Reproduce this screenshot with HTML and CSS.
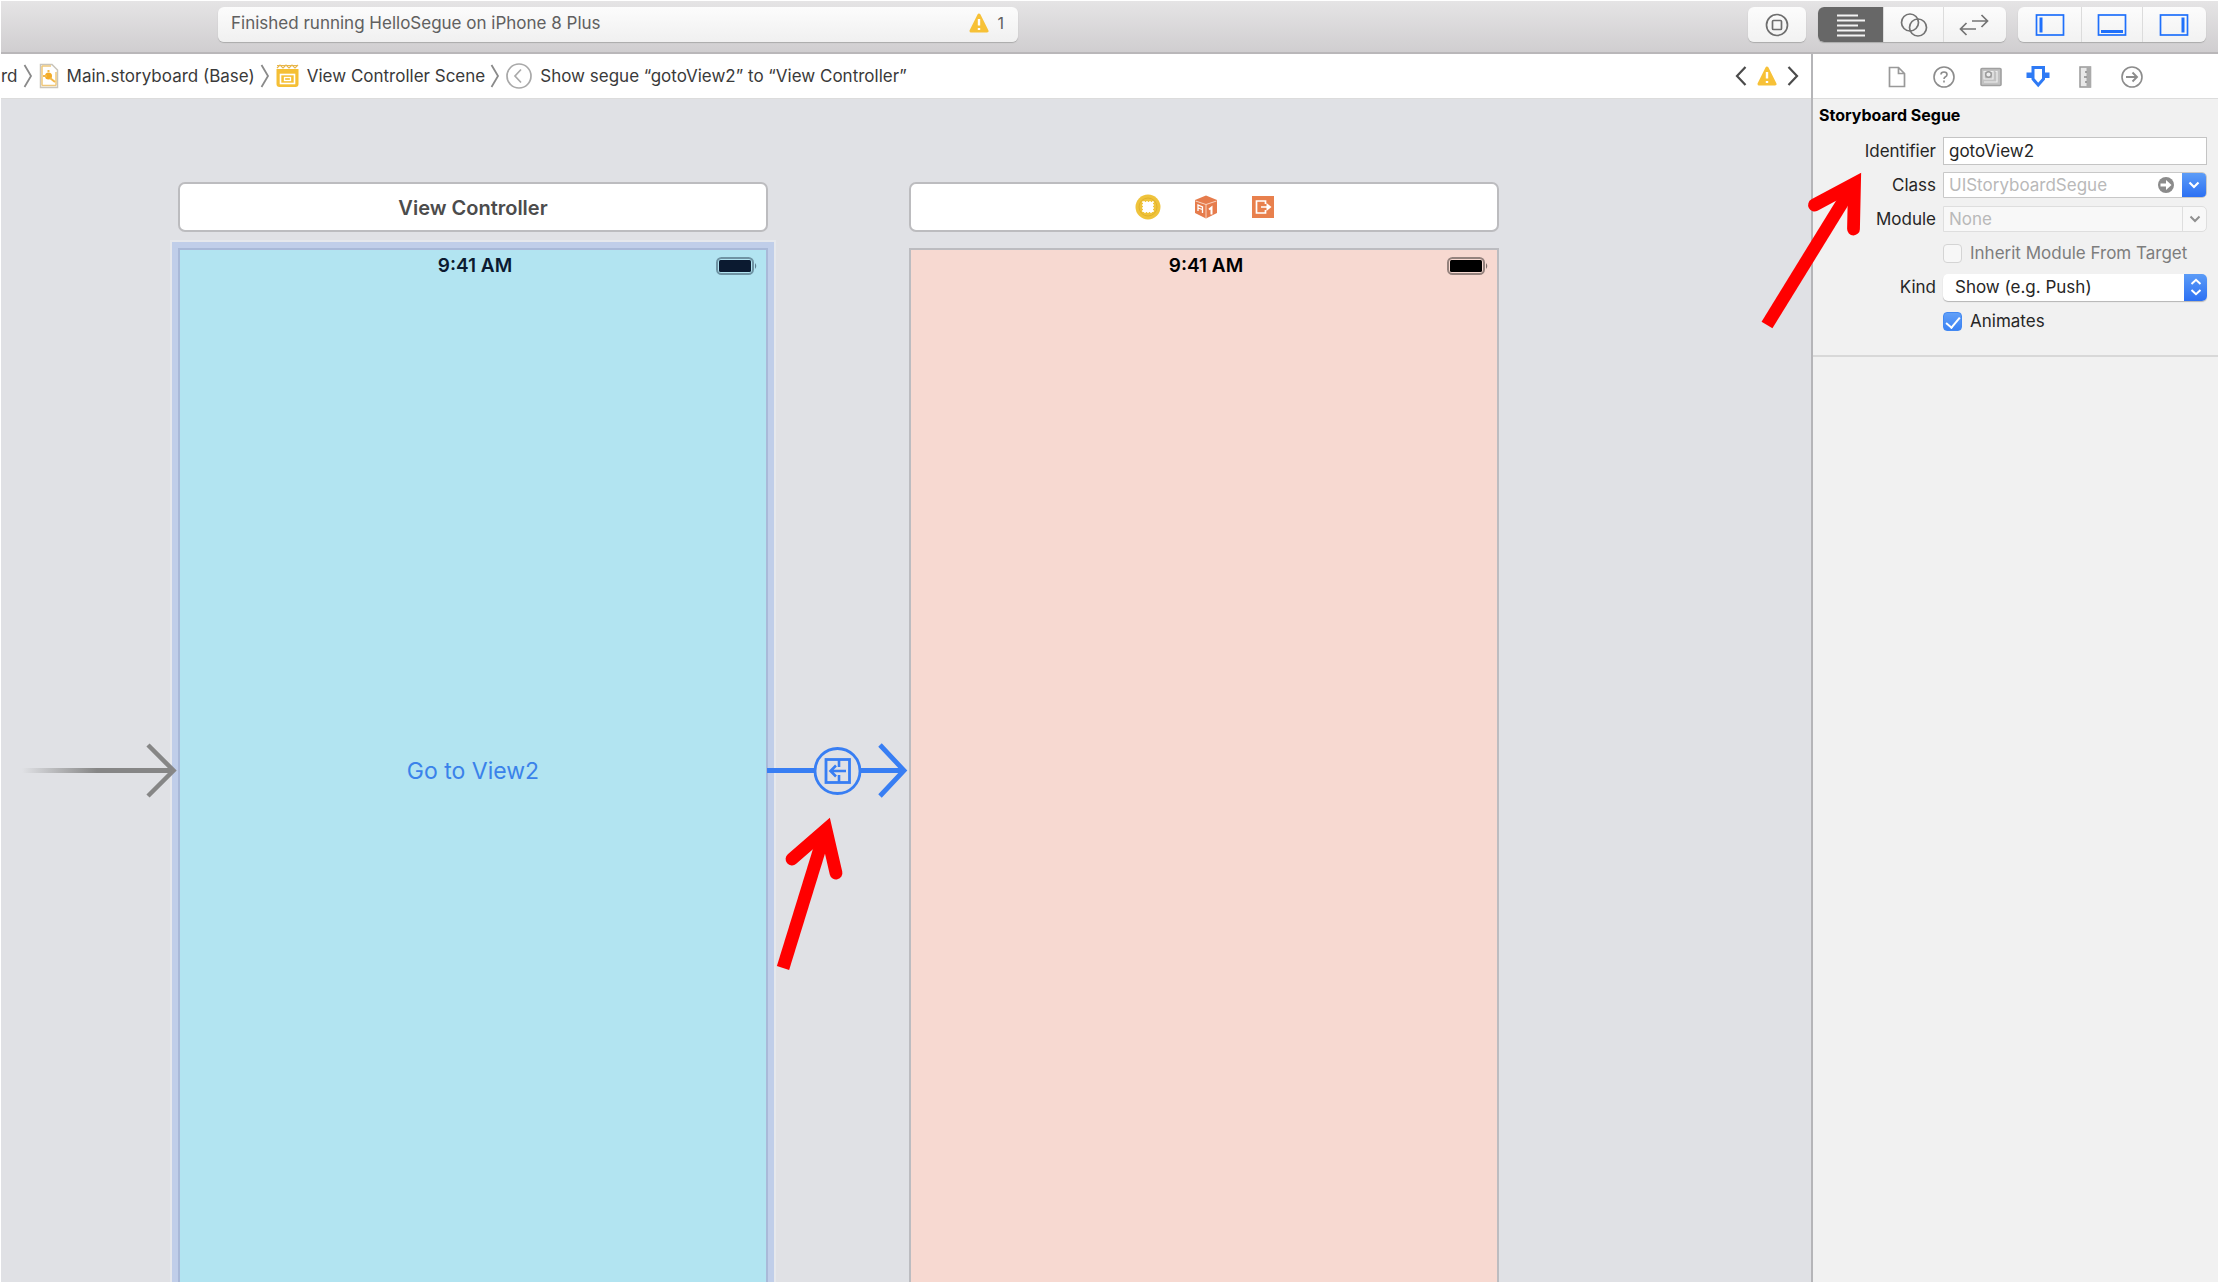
FILE: index.html
```html
<!DOCTYPE html>
<html lang="en">
<head>
<meta charset="utf-8">
<meta name="viewport" content="width=device-width, initial-scale=1">
<title>HelloSegue</title>
<link rel="stylesheet" href="styles.css">
</head>
<body>
<svg class="defs" width="0" height="0" aria-hidden="true">
  <symbol id="warning" viewBox="0 0 20 20">
    <path d="M10 2 L18 18 H2 Z" fill="#f7c137" stroke="#f7c137" stroke-width="3" stroke-linejoin="round"/>
    <path d="M10 6 V12.500 M10 15 V17" stroke="#fff" stroke-width="2.400"/>
  </symbol>
  <symbol id="separator" viewBox="0 0 10 24">
    <path d="M1.500 1 L8 12 L1.500 23" fill="none" stroke="#8a8a8a" stroke-width="1.800"/>
  </symbol>
  <symbol id="battery" viewBox="0 0 42 18">
    <rect x="1" y="1" width="36" height="16" rx="4.500" fill="none" stroke="currentColor" stroke-opacity=".4" stroke-width="2"/>
    <rect x="3" y="3" width="32" height="12" rx="1.500" fill="currentColor"/>
    <path d="M39 6 Q41.500 9 39 12 Z" fill="currentColor" fill-opacity=".5"/>
  </symbol>
</svg>

<div class="app">
  <header class="toolbar">
    <div class="activity">
      <span>Finished running HelloSegue on iPhone 8 Plus</span>
      <span class="issues"><svg class="i20" aria-hidden="true"><use href="#warning"/></svg>1</span>
    </div>
    <div class="tools">
      <div class="group single">
        <button type="button" aria-label="Library">
          <svg width="24" height="24" viewBox="0 0 24 24" fill="none" stroke="#6e6e6e" stroke-width="1.700"><circle cx="12" cy="12" r="10.500"/><rect x="7.500" y="7.500" width="9" height="9" rx="1"/></svg>
        </button>
      </div>
      <div class="group editors">
        <button type="button" class="active" aria-label="Standard editor">
          <svg width="30" height="24" viewBox="0 0 30 24" stroke="#f4f4f4" stroke-width="1.800"><path d="M1 2.500H22M1 7.500H29M1 12.500H22M1 17.500H29M1 22.500H29"/></svg>
        </button>
        <button type="button" aria-label="Assistant editor">
          <svg width="28" height="24" viewBox="0 0 28 24" fill="none" stroke="#737373" stroke-width="1.700"><circle cx="10" cy="9.500" r="8.500"/><circle cx="18" cy="14.500" r="8.500"/></svg>
        </button>
        <button type="button" aria-label="Version editor">
          <svg width="30" height="22" viewBox="0 0 30 22" fill="none" stroke="#737373" stroke-width="1.700"><path d="M13 7H28M22.500 1L28.500 7L22.500 13M17 15H2M7.500 9L1.500 15L7.500 21"/></svg>
        </button>
      </div>
      <div class="group panels">
        <button type="button" aria-label="Navigator">
          <svg width="30" height="24" viewBox="0 0 30 24" fill="none" stroke="#1f70fb"><rect x="1.500" y="2" width="27" height="20" stroke-width="1.700"/><path d="M6 4.500V19.500" stroke-width="3"/></svg>
        </button>
        <button type="button" aria-label="Debug area">
          <svg width="30" height="24" viewBox="0 0 30 24" fill="none" stroke="#1f70fb"><rect x="1.500" y="2" width="27" height="20" stroke-width="1.700"/><path d="M4 18.500H26" stroke-width="3"/></svg>
        </button>
        <button type="button" aria-label="Inspectors">
          <svg width="30" height="24" viewBox="0 0 30 24" fill="none" stroke="#1f70fb"><rect x="1.500" y="2" width="27" height="20" stroke-width="1.700"/><path d="M24 4.500V19.500" stroke-width="3"/></svg>
        </button>
      </div>
    </div>
  </header>

  <div class="workspace">
    <main class="editor">
      <nav class="jumpbar" aria-label="Jump bar">
        <span class="crumb">rd</span>
        <svg class="sep" aria-hidden="true"><use href="#separator"/></svg>
        <a class="crumb" href="#main">
          <svg width="20" height="26" viewBox="0 0 20 26" aria-hidden="true"><path d="M1.500 1.500H13L18.500 7V24.500H1.500Z" fill="#fff" stroke="#c9c5bb" stroke-width="1.500"/><path d="M3 3H12M3 3V22.500M17 9V22.500M3 22.500H17" stroke="#efc77a" stroke-width="1.500" fill="none"/><circle cx="9.500" cy="13" r="3.500" fill="#f3ab25"/><path d="M11 15L16 19M4 13H8M9.500 9V7" stroke="#f3b849" stroke-width="2"/></svg>
          Main.storyboard (Base)
        </a>
        <svg class="sep" aria-hidden="true"><use href="#separator"/></svg>
        <a class="crumb" href="#scene">
          <svg width="23" height="24" viewBox="0 0 23 24" aria-hidden="true"><path d="M.500 5H22.500V20Q22.500 23 19.500 23H3.500Q.500 23 .500 20Z" fill="#f5bf35"/><path d="M1 1.500H22M1 4L4 1L7 4L10 1L13 4L16 1L19 4L22 1" stroke="#e8b64a" stroke-width="1.200" fill="none"/><rect x="4.500" y="10.500" width="14" height="9" fill="none" stroke="#fff" stroke-width="1.600"/><rect x="8.500" y="13.500" width="6" height="3" fill="none" stroke="#fff" stroke-width="1.300"/></svg>
          View Controller Scene
        </a>
        <svg class="sep" aria-hidden="true"><use href="#separator"/></svg>
        <a class="crumb" href="#segue">
          <svg width="26" height="26" viewBox="0 0 26 26" fill="none" stroke="#a9a9a9" stroke-width="1.700" aria-hidden="true"><circle cx="13" cy="13" r="12"/><path d="M15 6.500L9 13L15 19.500"/></svg>
          Show segue “gotoView2” to “View Controller”
        </a>
        <span class="issue-nav">
          <button type="button" aria-label="Previous issue"><svg width="12" height="20" viewBox="0 0 12 20" fill="none" stroke="#4b4b4b" stroke-width="2.200"><path d="M10.500 1L2 10L10.500 19"/></svg></button>
          <svg class="i20" aria-hidden="true"><use href="#warning"/></svg>
          <button type="button" aria-label="Next issue"><svg width="12" height="20" viewBox="0 0 12 20" fill="none" stroke="#4b4b4b" stroke-width="2.200"><path d="M1.500 1L10 10L1.500 19"/></svg></button>
        </span>
      </nav>

      <div class="canvas" id="main">
        <section class="scene" id="scene">
          <div class="dock">View Controller</div>
          <div class="phone blue selected">
            <div class="statusbar"><span>9:41 AM</span><svg class="battery" aria-hidden="true"><use href="#battery"/></svg></div>
            <button type="button" class="goto">Go to View2</button>
          </div>
        </section>
        <section class="scene">
          <div class="dock icons">
            <svg width="26" height="26" viewBox="0 0 26 26" aria-label="View Controller"><circle cx="13" cy="13" r="12.500" fill="#efc33b"/><circle cx="13" cy="13" r="9" fill="none" stroke="#e2b12c" stroke-width="1"/><rect x="8" y="8" width="10" height="10" fill="#fff" stroke="#fff" stroke-width="1.500" stroke-dasharray="2 1"/></svg>
            <svg width="24" height="24" viewBox="0 0 24 24" aria-label="First Responder"><path d="M12 .500L23 5V18L12 23.500L1 18V5Z" fill="#e67c4c"/><path d="M1.500 6L12 9.500L22.500 6M12 9.500V23" fill="none" stroke="#f9d3bf" stroke-width="1"/><path d="M15 14.500L17.500 12.500V19.500" fill="none" stroke="#fff" stroke-width="2"/><path d="M4 16V10L8.500 12V18M4 13L8.500 14.500" fill="none" stroke="#fff" stroke-width="1.300"/></svg>
            <svg width="24" height="24" viewBox="0 0 24 24" aria-label="Exit"><path d="M1 1H23V23H1Z" fill="#e8804d"/><path d="M14.500 9V6H5.500V18H14.500V15M10 12H17" fill="none" stroke="#fff" stroke-width="1.700"/><path d="M15.500 8L20.500 12L15.500 16Z" fill="#fff"/></svg>
          </div>
          <div class="phone pink">
            <div class="statusbar"><span>9:41 AM</span><svg class="battery" aria-hidden="true"><use href="#battery"/></svg></div>
          </div>
        </section>

        <svg class="entry" width="156" height="56" viewBox="0 0 156 56" fill="none" aria-hidden="true">
          <defs><linearGradient id="fade" gradientUnits="userSpaceOnUse" x1="0" x2="75" y1="0" y2="0"><stop offset="0" stop-color="#868686" stop-opacity="0"/><stop offset="1" stop-color="#868686"/></linearGradient></defs>
          <rect x="0" y="26" width="150" height="5" fill="url(#fade)"/>
          <path d="M126 3L151.500 28.500L126 54" stroke="#868686" stroke-width="4.500"/>
        </svg>
        <svg class="segue" id="segue" width="142" height="56" viewBox="0 0 142 56" fill="none" stroke="#387ef3" aria-label="Show segue">
          <path d="M0 28.500H48M94 28.500H136M113 3L137 28.500L113 54" stroke-width="4.800"/>
          <circle cx="70.500" cy="29" r="22.500" stroke-width="2.800"/>
          <rect x="59" y="17.500" width="23.500" height="23" stroke-width="2.800"/><path d="M72 17.500V25M72 33V40.500M64 29H79M69 23.500L63.500 29L69 34.500" stroke-width="2.600"/>
        </svg>
        <svg class="callout segue-callout" width="60" height="160" viewBox="0 0 60 160" fill="none" stroke="#f00" stroke-width="12.800" aria-hidden="true">
          <path d="M9 153L50 20"/><path d="M18 44L52 14.500L62 58" stroke-linecap="round"/>
        </svg>
      </div>
    </main>

    <aside class="inspector">
      <div class="tabs">
        <button type="button" aria-label="File"><svg width="22" height="22" viewBox="0 0 22 22" fill="none" stroke="#999" stroke-width="1.700"><path d="M3.500 1.500H12.500L18.500 7.500V20.500H3.500ZM12.500 1.500V7.500H18.500"/></svg></button>
        <button type="button" aria-label="Quick help"><svg width="22" height="22" viewBox="0 0 22 22" fill="none" stroke="#8c8c8c" stroke-width="1.600"><circle cx="11" cy="11" r="10"/><path d="M8 8.500Q8 6 11 6T14 8.500Q14 10 12.500 10.800Q11 11.600 11 13M11 14.500V16.500"/></svg></button>
        <button type="button" aria-label="Identity"><svg width="22" height="22" viewBox="0 0 22 22"><rect x="1" y="2.500" width="20" height="17" rx="1" fill="#c2c2c2" stroke="#a0a0a0" stroke-width="1.600"/><path d="M4 5.500H13V13H4ZM15.500 5.500H17V16H4" fill="none" stroke="#eee" stroke-width="1.200"/><circle cx="8.500" cy="8.500" r="2.800" fill="#eee" stroke="#999" stroke-width="1.400"/></svg></button>
        <button type="button" aria-label="Attributes"><svg width="24" height="24" viewBox="0 0 24 24"><path d="M7 2.500H17.500V14L12.200 20L7 14Z" fill="#fff" stroke="#2e7af5" stroke-width="3"/><path d="M.500 7.500H6V13H.500ZM18.500 7.500H23.500V13H18.500Z" fill="#2e7af5"/></svg></button>
        <button type="button" aria-label="Size"><svg width="22" height="22" viewBox="0 0 22 22"><rect x="6" y="1" width="10.500" height="20" fill="#e9e9e9" stroke="#999" stroke-width="1.500"/><path d="M12.500 1H17V21H12.500Z" fill="#aaa"/><path d="M11 6H13M10 11H13M11 16H13" stroke="#8c8c8c" stroke-width="1.600"/></svg></button>
        <button type="button" aria-label="Connections"><svg width="22" height="22" viewBox="0 0 22 22" fill="none" stroke="#8c8c8c" stroke-width="1.600"><circle cx="11" cy="11" r="10"/><path d="M5 11H16M11.500 6.500L16 11L11.500 15.500" stroke-width="1.900"/></svg></button>
      </div>
      <form class="attributes">
        <h2>Storyboard Segue</h2>
        <div class="fields">
          <label for="identifier">Identifier</label>
          <input class="text" id="identifier" type="text" value="gotoView2">

          <label for="class">Class</label>
          <div class="combo">
            <input id="class" type="text" placeholder="UIStoryboardSegue">
            <svg width="16" height="16" viewBox="0 0 16 16" aria-hidden="true"><circle cx="8" cy="8" r="8" fill="#8b8b8b"/><path d="M2.500 6.500H8V3L13.500 8L8 13V9.500H2.500Z" fill="#fff"/></svg>
            <button type="button" aria-label="Choose class"><svg width="12" height="8" viewBox="0 0 12 8" fill="none" stroke="#fff" stroke-width="2.200"><path d="M1.500 1.500L6 6L10.500 1.500"/></svg></button>
          </div>

          <label for="module">Module</label>
          <div class="combo disabled">
            <input id="module" type="text" placeholder="None" disabled>
            <button type="button" aria-label="Choose module" disabled><svg width="12" height="8" viewBox="0 0 12 8" fill="none" stroke="#8f8f8f" stroke-width="2"><path d="M1.500 1.500L6 6L10.500 1.500"/></svg></button>
          </div>

          <label class="check muted"><input type="checkbox" disabled>Inherit Module From Target</label>

          <label for="kind">Kind</label>
          <div class="popup">
            <select id="kind"><option>Show (e.g. Push)</option></select>
            <span class="stepper"><svg width="12" height="18" viewBox="0 0 12 18" fill="none" stroke="#fff" stroke-width="2"><path d="M1.500 6L6 1.800L10.500 6M1.500 12L6 16.200L10.500 12"/></svg></span>
          </div>

          <label class="check"><input type="checkbox" checked>Animates</label>
        </div>
      </form>
      <svg class="callout form-callout" width="110" height="170" viewBox="0 0 110 170" fill="none" stroke="#f00" stroke-width="12.800" aria-hidden="true">
        <path d="M12 160L97 22"/><path d="M59.500 40L99.500 18.500L98.500 64" stroke-linecap="round"/>
      </svg>
    </aside>
  </div>
</div>
</body>
</html>
```
FILE: styles.css
```css
* { box-sizing: border-box; }

body {
  margin: 0;
  background: #fff;
  color: #333;
  font: 17px/24px Inter, "Liberation Sans", sans-serif;
}

button, input, select {
  margin: 0;
  padding: 0;
  border: 0;
  background: none;
  color: inherit;
  font: inherit;
}

svg { display: block; flex: none; }
.defs { position: absolute; }
.i20 { width: 20px; height: 20px; }

.app {
  display: flex;
  flex-direction: column;
  height: 100vh;
  border: 1px solid #fff;
  overflow: hidden;
}

/* Toolbar */
.toolbar {
  display: flex;
  flex: none;
  align-items: flex-start;
  justify-content: space-between;
  height: 53px;
  padding: 6px 12px 0 217px;
  border-bottom: 2px solid #b9b7b9;
  background: linear-gradient(#e5e4e5, #d0ced0);
}

.activity {
  display: flex;
  flex: 0 1 800px;
  align-items: center;
  justify-content: space-between;
  height: 35px;
  padding: 0 14px 3px 13px;
  border-radius: 6px;
  background: linear-gradient(#fcfcfc, #f0f0f0);
  box-shadow: 0 1px 1px #aaa;
  color: #606060;
  white-space: nowrap;
}

.issues { display: flex; align-items: center; gap: 8px; font-size: 16px; }

.tools { display: flex; gap: 12px; }

.group {
  display: flex;
  height: 35px;
  border-radius: 6px;
  background: linear-gradient(#fcfcfc, #f2f2f2);
  box-shadow: 0 1px 1px #aaa;
  overflow: hidden;
}

.group button {
  display: flex;
  flex: 1;
  align-items: center;
  justify-content: center;
}

.group button + button { border-left: 1px solid #dcdcdc; }
.single { width: 58px; }
.editors, .panels { width: 188px; }
.editors { padding-right: 3px; }
.panels { padding: 0 2px; }
.group .active { flex: 0 0 65px; background: #676767; }

/* Editor */
.workspace { display: flex; flex: 1; min-height: 0; }
.editor { display: flex; flex: 1; flex-direction: column; min-width: 0; }

.jumpbar {
  display: flex;
  flex: none;
  align-items: center;
  height: 45px;
  padding-right: 12px;
  border-bottom: 1px solid #dcdcdc;
  white-space: nowrap;
}

.crumb {
  display: flex;
  align-items: center;
  gap: 8px;
  color: #3a3a3a;
  text-decoration: none;
}

.sep { width: 10px; height: 24px; margin: 0 6px 0 5px; }
.issue-nav { display: flex; align-items: center; gap: 10px; margin-left: auto; }

.canvas {
  position: relative;
  display: flex;
  flex: 1;
  gap: 141px;
  min-height: 0;
  padding: 83px 0 0 177px;
  background: #e0e1e5;
  overflow: hidden;
}

.scene { display: flex; flex: 0 0 590px; flex-direction: column; gap: 16px; }

.dock {
  display: flex;
  flex: none;
  align-items: center;
  justify-content: center;
  height: 50px;
  padding-top: 2px;
  border: 2px solid #bcbcbf;
  border-radius: 7px;
  background: #fff;
  color: #4c4c4c;
  font-size: 20px;
  font-weight: 600;
}

.icons { gap: 33px; padding: 0 0 0 2px; }

.phone {
  display: flex;
  flex: 1;
  flex-direction: column;
  border: 2px solid #bcbcc0;
  border-bottom: 0;
}

.blue { background: #b2e4f1; color: #0b1a30; }
.pink { background: #f7d9d1; color: #000; }
.selected { border-color: #a9b9d8; box-shadow: 0 0 0 6px #c0cee9, 0 0 0 8px #e6e8ec; }

.statusbar {
  display: grid;
  grid-template-columns: 1fr auto 1fr;
  align-items: center;
  height: 32px;
  padding-left: 4px;
  font-size: 19px;
  font-weight: 600;
}

.statusbar span { grid-column: 2; }
.battery { width: 42px; height: 18px; margin-right: 8px; justify-self: end; }

.goto { margin-top: 475px; color: #3a82ea; font-size: 23px; line-height: 28px; }

.entry { position: absolute; left: 21px; top: 643px; }
.segue { position: absolute; left: 766px; top: 643px; }

.callout { position: absolute; overflow: visible; pointer-events: none; }
.segue-callout { left: 773px; top: 716px; }
.form-callout { left: -58px; top: 111px; }

/* Inspector */
.inspector {
  position: relative;
  flex: 0 0 407px;
  border-left: 2px solid #b5b5b8;
  background: #f1f1f1;
}

.tabs {
  display: flex;
  align-items: center;
  justify-content: center;
  gap: 23px;
  height: 45px;
  padding: 2px 2px 0 0;
  border-bottom: 1px solid #dcdcdc;
  background: #fff;
}

.tabs button { display: flex; justify-content: center; width: 24px; }

.attributes {
  padding: 4px 11px 20px 6px;
  border-bottom: 2px solid #d8d8d8;
  color: #262626;
}

h2 { margin: 0 0 10px; color: #000; font-size: 16px; line-height: 24px; font-weight: 700; }

.fields {
  display: grid;
  grid-template-columns: 117px 1fr;
  grid-auto-rows: 28px;
  align-items: center;
  gap: 6px 7px;
}

.fields > label { text-align: right; }

.text {
  width: 100%;
  height: 28px;
  padding: 0 5px;
  border: 1px solid #c4c4c4;
  background: #fff;
}

.combo {
  display: flex;
  align-items: center;
  height: 26px;
  border: 1px solid #c8c8c8;
  border-radius: 0 5px 5px 0;
  background: #fff;
  overflow: hidden;
}

.combo input { flex: 1; min-width: 0; padding-left: 5px; }
.combo input::placeholder { color: #b9b9b9; opacity: 1; }
.combo button {
  display: flex;
  align-items: center;
  justify-content: center;
  align-self: stretch;
  width: 24px;
  margin-left: 8px;
  background: linear-gradient(#5c9cf7, #2c70f3);
}
.disabled { border-color: #dedede; background: #f8f8f8; }
.disabled button { border-left: 1px solid #dedede; background: none; }

.check {
  display: flex;
  grid-column: 2;
  align-items: center;
  gap: 8px;
  white-space: nowrap;
}

.muted { color: #7d7d7d; }

.check input {
  display: flex;
  flex: none;
  justify-content: center;
  width: 19px;
  height: 19px;
  border: 1px solid #d4d4d4;
  border-radius: 4px;
  background: #f7f7f7;
  appearance: none;
}

.check input:checked { border-color: #4288f2; background: linear-gradient(#62a0f8, #3b82f4); }
.check input:checked::after {
  content: "";
  width: 6px;
  height: 12px;
  margin-top: 1px;
  border: solid #fff;
  border-width: 0 2px 2px 0;
  transform: rotate(40deg);
}

.popup {
  display: flex;
  height: 27px;
  border-radius: 5px;
  background: #fff;
  box-shadow: 0 1px 1px #b4b4b4;
  overflow: hidden;
}

.popup select { flex: 1; padding-left: 12px; appearance: none; }
.stepper {
  display: flex;
  align-items: center;
  justify-content: center;
  width: 23px;
  background: linear-gradient(#5c9cf7, #2c70f3);
}
```
